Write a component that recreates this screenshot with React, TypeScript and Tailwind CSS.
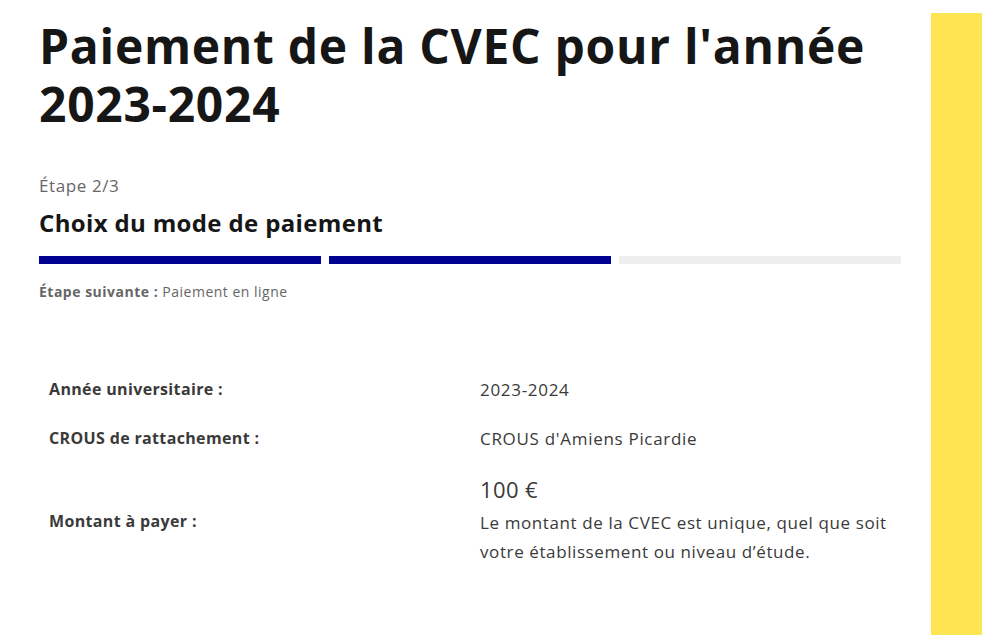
import React from "react";

const font = { fontFamily: '"Open Sans", "Liberation Sans", sans-serif' };

export default function App() {
  return (
    <div className="flex min-h-[635px] w-[982px] bg-white" style={font}>
      <main className="ml-[39px] w-[862px] shrink-0 pt-[17px]">
        <h1 className="text-[48px] font-bold leading-[58px] text-[#161616] tracking-[0.7px]">
          Paiement de la CVEC pour l'année 2023-2024
        </h1>
        <p className="mt-[41px] text-[17px] leading-[24px] tracking-[0.6px] text-[#666666]">Étape 2/3</p>
        <h2 className="mt-[11px] text-[24px] font-bold leading-[28px] tracking-[0.35px] text-[#161616]">
          Choix du mode de paiement
        </h2>
        <div className="mt-[19px] flex gap-[8px]">
          <div className="h-[8px] flex-1 bg-[#000091]" />
          <div className="h-[8px] flex-1 bg-[#000091]" />
          <div className="h-[8px] flex-1 bg-[#eeeeee]" />
        </div>
        <p className="mt-[18px] text-[14px] leading-[20px] tracking-[0.5px] text-[#666666]">
          <span className="font-bold">Étape suivante :</span> Paiement en ligne
        </p>
        <div className="mt-[63px] grid grid-cols-2 text-[#3a3a3a]">
          <div className="flex items-center px-[10px] py-[12px] text-[16px] font-bold leading-[25px] tracking-[0.35px]">Année universitaire :</div>
          <div className="flex items-center px-[10px] py-[12px] text-[17px] leading-[25px] tracking-[0.7px]">2023-2024</div>
          <div className="flex items-center px-[10px] py-[12px] text-[16px] font-bold leading-[25px] tracking-[0.35px]">CROUS de rattachement :</div>
          <div className="flex items-center px-[10px] py-[12px] text-[17px] leading-[25px] tracking-[0.7px]">CROUS d'Amiens Picardie</div>
          <div className="flex items-center px-[10px] pb-[10px] pt-[14px] text-[16px] font-bold leading-[25px] tracking-[0.35px]">Montant à payer :</div>
          <div className="flex flex-col px-[10px] py-[10px]">
            <span className="text-[22px] leading-[32px] tracking-[0.4px]">100 €</span>
            <span className="mt-[3px] text-[17px] leading-[29px] tracking-[0.6px]">
              Le montant de la CVEC est unique, quel que soit votre établissement ou niveau d’étude.
            </span>
          </div>
        </div>
      </main>
      <aside className="ml-[30px] mt-[13px] w-[51px] shrink-0 bg-[#ffe552]" />
    </div>
  );
}
